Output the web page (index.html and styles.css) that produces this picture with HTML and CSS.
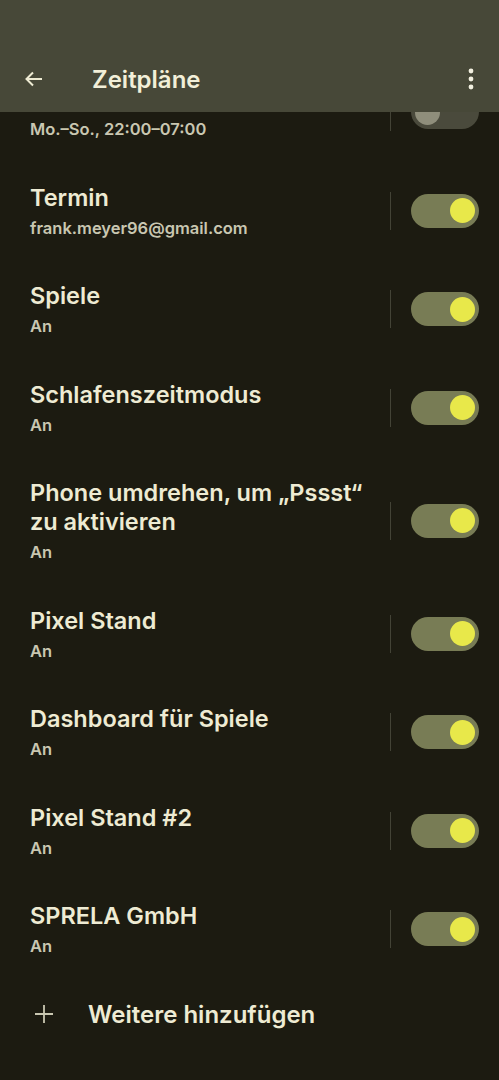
FILE: index.html
```html
<!DOCTYPE html>
<html lang="de">
    <head>
        <meta charset="utf-8" />
        <title>Zeitpläne</title>
        <link rel="stylesheet" href="styles.css">
    </head>
    <body>
        <div id="appbar">
            <svg class="icon back" width="24" height="24" viewBox="0 0 24 24">
                <path d="M20 12H5M11 5.5L4.5 12l6.5 6.5" fill="none" stroke="#eeebd3" stroke-width="2"/>
            </svg>
            <h1>Zeitpläne</h1>
            <svg class="icon more" width="8" height="24" viewBox="0 0 8 24">
                <circle cx="4" cy="4" r="2.4" fill="#f2f0e0"/>
                <circle cx="4" cy="12" r="2.4" fill="#f2f0e0"/>
                <circle cx="4" cy="20" r="2.4" fill="#f2f0e0"/>
            </svg>
        </div>
        <ul id="schedules">
            <li class="row">
                <div class="text">
                    <h3>&nbsp;</h3>
                    <p>Mo.–So., 22:00–07:00</p>
                </div>
                <div class="divider"></div>
                <div class="switch"><span></span></div>
            </li>
            <li class="row">
                <div class="text">
                    <h3>Termin</h3>
                    <p>frank.meyer96@gmail.com</p>
                </div>
                <div class="divider"></div>
                <div class="switch on"><span></span></div>
            </li>
            <li class="row">
                <div class="text">
                    <h3>Spiele</h3>
                    <p>An</p>
                </div>
                <div class="divider"></div>
                <div class="switch on"><span></span></div>
            </li>
            <li class="row">
                <div class="text">
                    <h3>Schlafenszeitmodus</h3>
                    <p>An</p>
                </div>
                <div class="divider"></div>
                <div class="switch on"><span></span></div>
            </li>
            <li class="row">
                <div class="text">
                    <h3>Phone umdrehen, um „Pssst“ zu aktivieren</h3>
                    <p>An</p>
                </div>
                <div class="divider"></div>
                <div class="switch on"><span></span></div>
            </li>
            <li class="row">
                <div class="text">
                    <h3>Pixel Stand</h3>
                    <p>An</p>
                </div>
                <div class="divider"></div>
                <div class="switch on"><span></span></div>
            </li>
            <li class="row">
                <div class="text">
                    <h3>Dashboard für Spiele</h3>
                    <p>An</p>
                </div>
                <div class="divider"></div>
                <div class="switch on"><span></span></div>
            </li>
            <li class="row">
                <div class="text">
                    <h3>Pixel Stand #2</h3>
                    <p>An</p>
                </div>
                <div class="divider"></div>
                <div class="switch on"><span></span></div>
            </li>
            <li class="row">
                <div class="text">
                    <h3>SPRELA GmbH</h3>
                    <p>An</p>
                </div>
                <div class="divider"></div>
                <div class="switch on"><span></span></div>
            </li>
        </ul>
        <div id="addMore">
            <svg class="icon" width="24" height="24" viewBox="0 0 24 24">
                <path d="M12 3v18M3 12h18" fill="none" stroke="#c9c7b1" stroke-width="1.8"/>
            </svg>
            <span>Weitere hinzufügen</span>
        </div>
    </body>
</html>
```

FILE: styles.css
```css
body{
    background-color: #1c1b11;
    color: #eeebd3;
    font-family: "Inter", sans-serif;
    margin: 0;
    width: 499px;
    height: 1080px;
    overflow: hidden;
}

#appbar{
    position: fixed;
    top: 0;
    left: 0;
    right: 0;
    height: 112px;
    box-sizing: border-box;
    padding: 48px 24px 2px 22px;
    background-color: #474838;
    display: flex;
    align-items: center;
    z-index: 2;
}

#appbar h1{
    flex: 1;
    margin: 0 0 0 46px;
    font-size: 24px;
    font-weight: 600;
    color: #f2efd8;
}

.icon{
    display: block;
    flex-shrink: 0;
}

#schedules{
    list-style-type: none;
    margin: 62px 0 0;
    padding: 0;
}

.row{
    display: flex;
    align-items: center;
    padding: 22px 20px 20.5px 30px;
}

.text{
    flex: 1;
}

.text h3{
    margin: 0;
    font-size: 23.5px;
    line-height: 29px;
    font-weight: 600;
    color: #eeebd3;
    max-width: 345px;
}

.text p{
    margin: 6px 0 0;
    font-size: 16.5px;
    line-height: 21px;
    font-weight: 600;
    color: #c9c7b1;
}

.divider{
    width: 1px;
    height: 38px;
    background-color: #434336;
    margin: 0 20px 0 0;
}

.switch{
    width: 68px;
    height: 34px;
    border-radius: 17px;
    background-color: #4a4a3c;
    display: flex;
    align-items: center;
    padding: 0 4px;
    box-sizing: border-box;
}

.switch span{
    width: 25px;
    height: 25px;
    border-radius: 50%;
    background-color: #8f8e7b;
}

.switch.on{
    background-color: #787c55;
    justify-content: flex-end;
}

.switch.on span{
    background-color: #e8e84a;
}

#addMore{
    display: flex;
    align-items: center;
    padding: 22px 30px 0 32px;
    font-size: 24px;
    font-weight: 600;
    color: #eeebd3;
}

#addMore span{
    margin-left: 32px;
}
```
